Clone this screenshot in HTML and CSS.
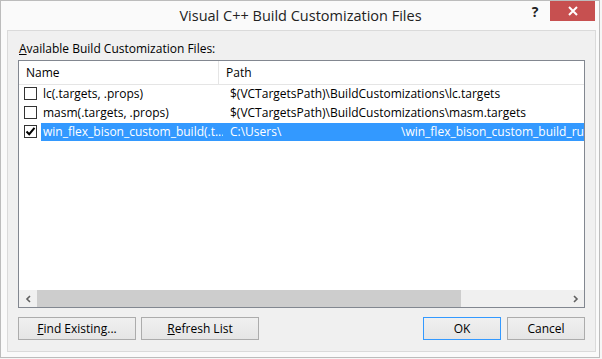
FILE: index.html
```html
<!DOCTYPE html>
<html lang="en">
<head>
  <meta charset="UTF-8">
  <title>Visual C++ Build Customization Files</title>
  <link rel="stylesheet" href="styles.css">
</head>
<body>
  <div class="window">
    <div class="titlebar">
      <div class="title">Visual C++ Build Customization Files</div>
      <div class="help">?</div>
      <div class="close">
        <svg width="10" height="10" viewBox="0 0 10 10"><path d="M1 1 L9 9 M9 1 L1 9" stroke="#fff" stroke-width="2"/></svg>
      </div>
    </div>
    <div class="client">
      <div class="label"><u>A</u>vailable Build Customization Files:</div>
      <div class="listbox">
        <div class="header">
          <div class="col-name">Name</div>
          <div class="col-path">Path</div>
        </div>
        <div class="rows">
          <div class="row">
            <span class="check"></span>
            <span class="cell-name">lc(.targets, .props)</span>
            <span class="cell-path">$(VCTargetsPath)\BuildCustomizations\lc.targets</span>
          </div>
          <div class="row">
            <span class="check"></span>
            <span class="cell-name">masm(.targets, .props)</span>
            <span class="cell-path">$(VCTargetsPath)\BuildCustomizations\masm.targets</span>
          </div>
          <div class="row selected">
            <span class="check checked">
              <svg width="11" height="11" viewBox="0 0 11 11"><path d="M1.5 5.5 L4.2 8.2 L9.5 1.8" fill="none" stroke="#000" stroke-width="2"/></svg>
            </span>
            <span class="cell-name sel">win_flex_bison_custom_build(.t...</span>
            <span class="cell-path sel"><span class="user">C:\Users\</span><span>\win_flex_bison_custom_build_rule</span></span>
          </div>
        </div>
        <div class="hscroll">
          <div class="arrow">
            <svg width="7" height="8" viewBox="0 0 7 8"><path d="M5 1 L2 4 L5 7" fill="none" stroke="#606060" stroke-width="1.6"/></svg>
          </div>
          <div class="thumb"></div>
          <div class="track"></div>
          <div class="arrow">
            <svg width="7" height="8" viewBox="0 0 7 8"><path d="M2 1 L5 4 L2 7" fill="none" stroke="#606060" stroke-width="1.6"/></svg>
          </div>
        </div>
      </div>
      <div class="buttons">
        <button class="btn wide"><u>F</u>ind Existing...</button>
        <button class="btn wide"><u>R</u>efresh List</button>
        <div class="spacer"></div>
        <button class="btn default">OK</button>
        <button class="btn">Cancel</button>
      </div>
    </div>
  </div>
</body>
</html>
```
FILE: styles.css
```css
* { box-sizing: border-box; }
body {
  margin: 0;
  font-family: "Open Sans", "Noto Sans", sans-serif;
  font-size: 12px;
  color: #000;
  background: #f6f6f6;
}
.window {
  width: 600px; height: 358px;
  background: #fafafa;
  border: 1px solid #bcbcbc;
  display: flex; flex-direction: column;
}
.titlebar {
  height: 29px;
  display: flex; align-items: flex-start;
}
.title {
  flex: 1;
  text-align: center;
  font-size: 14.5px;
  line-height: 29px;
  color: #222;
  padding-left: 80px;
}
.help {
  width: 30px; height: 20px;
  font-weight: bold; font-size: 14px;
  color: #222;
  text-align: center; line-height: 22px;
}
.close {
  width: 45px; height: 20px;
  margin-right: 4px;
  background: #c75050;
  display: flex; align-items: center; justify-content: center;
}
.client {
  flex: 1;
  margin: 0 3px 5px 6px;
  background: #f0f0f0;
  border: 1px solid #dadada;
  padding: 0 10px 11px 10px;
  display: flex; flex-direction: column;
}
.label { padding: 9px 0 0 1px; height: 29px; line-height: 18px; }
.listbox {
  flex: 1;
  background: #fff;
  border: 1px solid #828790;
  display: flex; flex-direction: column;
  overflow: hidden;
}
.header {
  height: 24px;
  display: flex;
  border-bottom: 1px solid #e5e5e5;
  line-height: 23px;
}
.col-name { width: 200px; padding-left: 7px; border-right: 1px solid #e5e5e5; }
.col-path { padding-left: 7px; }
.rows { flex: 1; }
.row {
  height: 19px;
  display: flex; align-items: center;
  white-space: nowrap;
}
.row:first-child { margin-top: -1px; }
.check {
  width: 13px; height: 13px;
  margin: 0 4px 0 5px;
  border: 1px solid #333;
  background: #fff;
  flex: none;
  display: flex; align-items: center; justify-content: center;
}
.cell-name { width: 182px; padding-left: 2px; overflow: hidden; }
.cell-path { padding-left: 7px; flex: 1; overflow: hidden; }
.sel { background: #3399ff; color: #fff; height: 18px; line-height: 18px; }
.user { display: inline-block; width: 171px; }
.hscroll {
  height: 17px;
  display: flex;
  background: #f0f0f0;
}
.arrow { width: 18px; display: flex; align-items: center; justify-content: center; }
.thumb { width: 424px; background: #cdcdcd; }
.track { flex: 1; }
.buttons {
  display: flex; gap: 5px;
  margin-top: 9px;
}
.spacer { flex: 1; }
.btn {
  height: 23px;
  width: 78px;
  font: inherit;
  color: #000;
  border: 1px solid #acacac;
  background: linear-gradient(#f0f0f0, #e5e5e5);
  padding: 0;
}
.btn.wide { width: 118px; }
.btn.default { border-color: #3399ff; margin-right: 1px; }
```
